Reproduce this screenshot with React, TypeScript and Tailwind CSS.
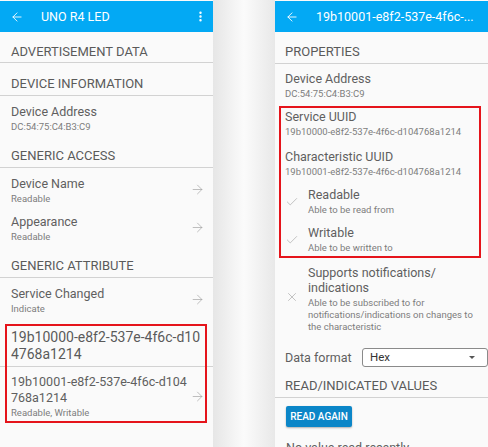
import { ArrowLeft, ArrowRight, Check, X, EllipsisVertical } from 'lucide-react'

function Header({ title, menu }: { title: string; menu?: boolean }) {
  return (
    <div className="mt-px h-[31px] bg-[#03a9f4] flex items-center pl-[10px] pr-[6px] text-white">
      <ArrowLeft size={14} strokeWidth={1.5} />
      <div className="ml-[17px] flex-1 text-[12.5px] leading-4 whitespace-nowrap overflow-hidden">{title}</div>
      {menu && <EllipsisVertical size={13} strokeWidth={2.5} />}
    </div>
  )
}

function SectionHeader({ text, pt, pb }: { text: string; pt: string; pb: string }) {
  return (
    <div className={`border-b border-[#d2d2d2] px-[11px] text-[13px] leading-4 text-[#5a5a5a] whitespace-nowrap ${pt} ${pb}`}>{text}</div>
  )
}

function Row({ title, sub, pt, arrow }: { title: string; sub: string; pt: string; arrow?: boolean }) {
  return (
    <div className={`flex items-center pl-[11px] pr-[8px] ${pt}`}>
      <div className="flex-1">
        <div className="text-[12.5px] leading-4 text-[#5f5f5f]">{title}</div>
        <div className="text-[9.5px] leading-[13px] text-[#7d7d7d]">{sub}</div>
      </div>
      {arrow && <ArrowRight size={15} strokeWidth={1} className="text-[#9a9a9a] -mt-[3px]" />}
    </div>
  )
}

function LeftPhone() {
  return (
    <div className="w-[213px] h-full bg-[#fafafa] shrink-0">
      <Header title="UNO R4 LED" menu />
      <SectionHeader text="ADVERTISEMENT DATA" pt="pt-[12px]" pb="pb-[2px]" />
      <SectionHeader text="DEVICE INFORMATION" pt="pt-[13px]" pb="pb-[3px]" />
      <Row title="Device Address" sub="DC:54:75:C4:B3:C9" pt="pt-[8px]" />
      <SectionHeader text="GENERIC ACCESS" pt="pt-[15px]" pb="pb-[3px]" />
      <Row title="Device Name" sub="Readable" pt="pt-[8px]" arrow />
      <Row title="Appearance" sub="Readable" pt="pt-[9px]" arrow />
      <SectionHeader text="GENERIC ATTRIBUTE" pt="pt-[15px]" pb="pb-[3px]" />
      <Row title="Service Changed" sub="Indicate" pt="pt-[8px]" arrow />
      <div className="relative">
        <div className="border-b border-[#d2d2d2] px-[11px] pt-[14px] pb-[3px] text-[14px] leading-[17px] text-[#5a5a5a] whitespace-nowrap">
          19b10000-e8f2-537e-4f6c-d10
          <br />
          4768a1214
        </div>
        <div className="flex items-center pl-[11px] pr-[8px] pt-[7px] pb-[6px]">
          <div className="flex-1">
            <div className="text-[12.5px] leading-4 text-[#5f5f5f] whitespace-nowrap">
              19b10001-e8f2-537e-4f6c-d104
              <br />
              768a1214
            </div>
            <div className="text-[9.5px] leading-[13px] text-[#7d7d7d]">Readable, Writable</div>
          </div>
          <ArrowRight size={15} strokeWidth={1} className="text-[#9a9a9a]" />
        </div>
        <div className="absolute left-[5px] top-[9px] w-[202px] h-[99px] border-2 border-[#e5141b]" />
      </div>
    </div>
  )
}

function PropRow({ title, sub, pt }: { title: string; sub: string; pt: string }) {
  return (
    <div className={`px-[10px] ${pt}`}>
      <div className="text-[12.5px] leading-4 text-[#5f5f5f]">{title}</div>
      <div className="text-[9.5px] leading-[13px] text-[#7d7d7d] whitespace-nowrap">{sub}</div>
    </div>
  )
}

function Flag({ title, sub, pt }: { title: string; sub: string; pt: string }) {
  return (
    <div className={`flex items-center ${pt}`}>
      <div className="w-[33px] flex justify-center">
        <Check size={14} strokeWidth={1} className="text-[#9a9a9a]" />
      </div>
      <div>
        <div className="text-[12.5px] leading-4 text-[#5f5f5f]">{title}</div>
        <div className="text-[9.5px] leading-[13px] text-[#7d7d7d]">{sub}</div>
      </div>
    </div>
  )
}

function RightPhone() {
  return (
    <div className="w-[213px] h-full bg-[#fafafa] shrink-0 overflow-hidden">
      <Header title="19b10001-e8f2-537e-4f6c-..." />
      <div className="border-b border-[#d2d2d2] px-[10px] pt-[12px] pb-[3px] text-[13px] leading-4 text-[#5a5a5a]">PROPERTIES</div>
      <PropRow title="Device Address" sub="DC:54:75:C4:B3:C9" pt="pt-[7px]" />
      <div className="relative">
        <PropRow title="Service UUID" sub="19b10000-e8f2-537e-4f6c-d104768a1214" pt="pt-[9px]" />
        <PropRow title="Characteristic UUID" sub="19b10001-e8f2-537e-4f6c-d104768a1214" pt="pt-[11px]" />
        <Flag title="Readable" sub="Able to be read from" pt="pt-[9px]" />
        <Flag title="Writable" sub="Able to be written to" pt="pt-[9px]" />
        <div className="absolute left-[4px] top-[6px] w-[202px] h-[152px] border-2 border-[#e5141b]" />
      </div>
      <div className="flex items-center pt-[11px]">
        <div className="w-[33px] flex justify-center -mt-[4px]">
          <X size={14} strokeWidth={1} className="text-[#9a9a9a]" />
        </div>
        <div>
          <div className="text-[12.5px] leading-[15px] text-[#5f5f5f]">
            Supports notifications/
            <br />
            indications
          </div>
          <div className="mt-[2px] text-[9.5px] leading-3 text-[#7d7d7d] whitespace-nowrap">
            Able to be subscribed to for
            <br />
            notifications/indications on changes to
            <br />
            the characteristic
          </div>
        </div>
      </div>
      <div className="flex items-center pl-[10px] mt-[15px] h-[19px]">
        <div className="w-[77px] text-[12.5px] leading-4 text-[#5f5f5f]">Data format</div>
        <div className="flex-1 h-[19px] border border-[#8a8a8a] rounded-[3px] bg-white flex items-center pl-[7px] pr-[12px] text-[11.5px] text-[#333]">
          <span className="flex-1">Hex</span>
          <span className="w-0 h-0 border-l-[3px] border-r-[3px] border-t-[3px] border-l-transparent border-r-transparent border-t-[#555]" />
        </div>
      </div>
      <div className="border-b border-[#d2d2d2] px-[10px] pt-[11px] pb-[3px] text-[13px] leading-4 text-[#5a5a5a] whitespace-nowrap">READ/INDICATED VALUES</div>
      <div className="px-[11px] mt-[5px]">
        <button className="h-[21px] w-[66px] bg-[#0b86c8] text-white text-[10px] font-medium rounded-[2px] shadow-[0_1px_2px_rgba(0,0,0,0.3)]">READ AGAIN</button>
      </div>
      <div className="px-[11px] mt-[13px] text-[12.5px] leading-4 text-[#5f5f5f] whitespace-nowrap">No value read recently</div>
    </div>
  )
}

export default function App() {
  return (
    <div className="w-[488px] h-[447px] overflow-hidden flex bg-white font-['Roboto',sans-serif]">
      <LeftPhone />
      <div className="w-[62px] h-full bg-gradient-to-r from-[#e6e6e6] via-[#fbfbfb] to-[#e8e8e8]" />
      <RightPhone />
    </div>
  )
}
